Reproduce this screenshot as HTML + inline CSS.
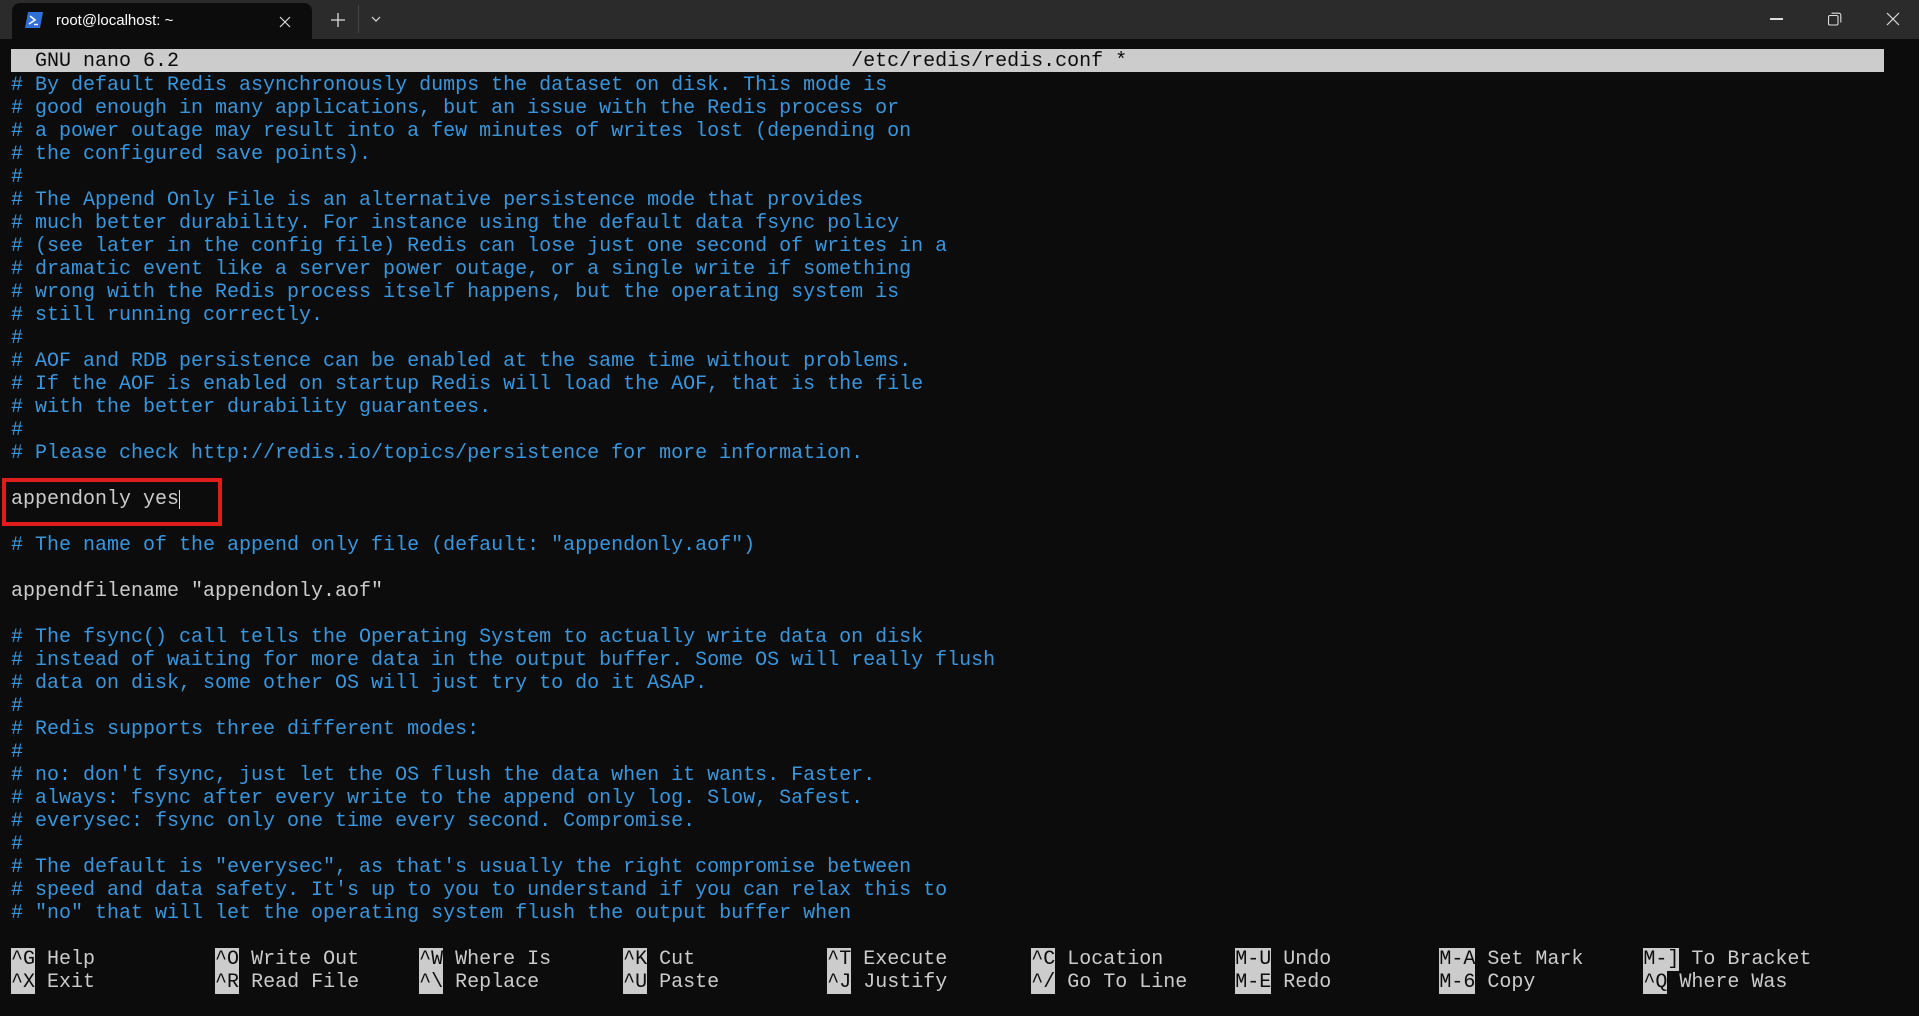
<!DOCTYPE html>
<html><head><meta charset="utf-8">
<style>
html,body{margin:0;padding:0;}
body{width:1919px;height:1016px;background:#0c0c0c;overflow:hidden;position:relative;font-family:"Liberation Mono",monospace;}
#tb{position:absolute;left:0;top:0;width:1919px;height:39px;background:#2b2b2b;}
#tab{position:absolute;left:12px;top:3px;width:300px;height:36px;background:#0c0c0c;border-radius:8px 8px 0 0;}
#tab .t{position:absolute;left:44px;top:9px;font:15px "Liberation Sans",sans-serif;color:#fff;}
.row{position:absolute;left:11px;height:23px;line-height:23px;font-size:20px;white-space:pre;margin-top:2px;}
.c{color:#3a96dd;}
.w{color:#cccccc;}
#hdr{position:absolute;left:11px;top:49px;width:1873px;height:23px;background:#cccccc;}
.k{background:#cccccc;color:#0c0c0c;}
.f{color:#cccccc;}
</style></head><body>
<div id="tb">
 <div id="tab">
  <svg style="position:absolute;left:13px;top:9px" width="18" height="16" viewBox="0 0 18 16"><path d="M3 0H18L15 16H0Z" fill="#2f6fd6"/><path d="M5 4l5 4-6 4" stroke="#fff" stroke-width="1.6" fill="none"/><path d="M9 12.5h4" stroke="#fff" stroke-width="1.4"/></svg>
  <div class="t">root@localhost: ~</div>
  <svg style="position:absolute;left:267px;top:13px" width="12" height="12" viewBox="0 0 12 12"><path d="M1 1L11 11M11 1L1 11" stroke="#ddd" stroke-width="1.2"/></svg>
 </div>
 <svg style="position:absolute;left:331px;top:13px" width="14" height="14" viewBox="0 0 14 14"><path d="M7 0V14M0 7H14" stroke="#ddd" stroke-width="1.3"/></svg>
 <div style="position:absolute;left:358px;top:5px;width:1px;height:28px;background:#444"></div>
 <svg style="position:absolute;left:371px;top:16px" width="10" height="6" viewBox="0 0 10 6"><path d="M1 1L5 5L9 1" stroke="#ddd" stroke-width="1.2" fill="none"/></svg>
 <div style="position:absolute;left:1770px;top:18px;width:13px;height:1.5px;background:#ddd"></div>
 <svg style="position:absolute;left:1828px;top:12px" width="14" height="14" viewBox="0 0 14 14"><rect x="0.5" y="3.5" width="9.5" height="9.5" rx="1.5" fill="none" stroke="#ddd" stroke-width="1.1"/><path d="M3.5 1.2h7.3a2 2 0 0 1 2 2v7.3" fill="none" stroke="#ddd" stroke-width="1.1"/></svg>
 <svg style="position:absolute;left:1886px;top:12px" width="14" height="14" viewBox="0 0 14 14"><path d="M1 1L13 13M13 1L1 13" stroke="#ddd" stroke-width="1.2"/></svg>
</div>
<div id="hdr"></div>
<div class="row" style="top:48px;color:#0c0c0c">  GNU nano 6.2                                                        /etc/redis/redis.conf *</div>
<div class="row c" style="top:72px"># By default Redis asynchronously dumps the dataset on disk. This mode is</div>
<div class="row c" style="top:95px"># good enough in many applications, but an issue with the Redis process or</div>
<div class="row c" style="top:118px"># a power outage may result into a few minutes of writes lost (depending on</div>
<div class="row c" style="top:141px"># the configured save points).</div>
<div class="row c" style="top:164px">#</div>
<div class="row c" style="top:187px"># The Append Only File is an alternative persistence mode that provides</div>
<div class="row c" style="top:210px"># much better durability. For instance using the default data fsync policy</div>
<div class="row c" style="top:233px"># (see later in the config file) Redis can lose just one second of writes in a</div>
<div class="row c" style="top:256px"># dramatic event like a server power outage, or a single write if something</div>
<div class="row c" style="top:279px"># wrong with the Redis process itself happens, but the operating system is</div>
<div class="row c" style="top:302px"># still running correctly.</div>
<div class="row c" style="top:325px">#</div>
<div class="row c" style="top:348px"># AOF and RDB persistence can be enabled at the same time without problems.</div>
<div class="row c" style="top:371px"># If the AOF is enabled on startup Redis will load the AOF, that is the file</div>
<div class="row c" style="top:394px"># with the better durability guarantees.</div>
<div class="row c" style="top:417px">#</div>
<div class="row c" style="top:440px"># Please check http://redis.io/topics/persistence for more information.</div>
<div class="row w" style="top:486px">appendonly yes</div>
<div style="position:absolute;left:179px;top:490px;width:1px;height:19px;background:#ddd"></div>
<div style="position:absolute;left:2px;top:478px;width:212px;height:40px;border:4px solid #e01b1b;"></div>
<div class="row c" style="top:532px"># The name of the append only file (default: "appendonly.aof")</div>
<div class="row w" style="top:578px">appendfilename "appendonly.aof"</div>
<div class="row c" style="top:624px"># The fsync() call tells the Operating System to actually write data on disk</div>
<div class="row c" style="top:647px"># instead of waiting for more data in the output buffer. Some OS will really flush</div>
<div class="row c" style="top:670px"># data on disk, some other OS will just try to do it ASAP.</div>
<div class="row c" style="top:693px">#</div>
<div class="row c" style="top:716px"># Redis supports three different modes:</div>
<div class="row c" style="top:739px">#</div>
<div class="row c" style="top:762px"># no: don't fsync, just let the OS flush the data when it wants. Faster.</div>
<div class="row c" style="top:785px"># always: fsync after every write to the append only log. Slow, Safest.</div>
<div class="row c" style="top:808px"># everysec: fsync only one time every second. Compromise.</div>
<div class="row c" style="top:831px">#</div>
<div class="row c" style="top:854px"># The default is "everysec", as that's usually the right compromise between</div>
<div class="row c" style="top:877px"># speed and data safety. It's up to you to understand if you can relax this to</div>
<div class="row c" style="top:900px"># "no" that will let the operating system flush the output buffer when</div>
<div class="row f" style="top:946px"><span class="k">^G</span> Help          <span class="k">^O</span> Write Out     <span class="k">^W</span> Where Is      <span class="k">^K</span> Cut           <span class="k">^T</span> Execute       <span class="k">^C</span> Location      <span class="k">M-U</span> Undo         <span class="k">M-A</span> Set Mark     <span class="k">M-]</span> To Bracket</div>
<div class="row f" style="top:969px"><span class="k">^X</span> Exit          <span class="k">^R</span> Read File     <span class="k">^\</span> Replace       <span class="k">^U</span> Paste         <span class="k">^J</span> Justify       <span class="k">^/</span> Go To Line    <span class="k">M-E</span> Redo         <span class="k">M-6</span> Copy         <span class="k">^Q</span> Where Was</div>
</body></html>
